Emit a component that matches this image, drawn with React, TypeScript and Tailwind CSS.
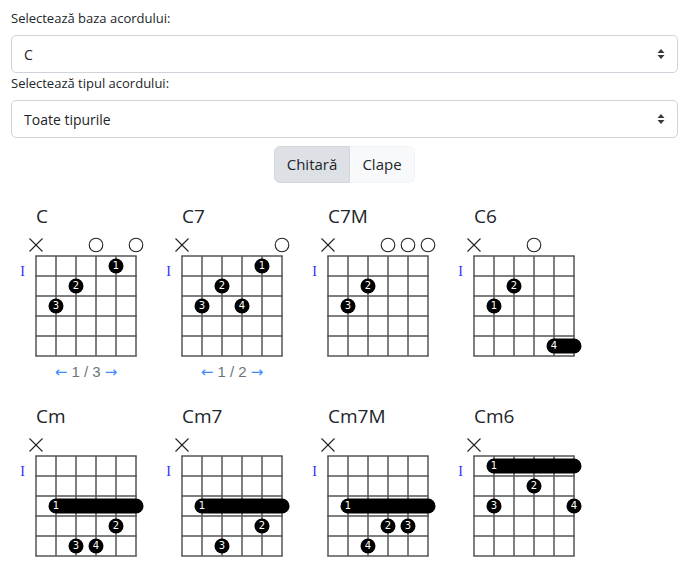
import React from "react";

type Dot = { s: number; f: number; n: number; to?: number };
type Chord = { name: string; marks: (string | null)[]; dots: Dot[]; nav?: string };

const chords: Chord[] = [
  { name: "C", marks: ["x", null, null, "o", null, "o"], dots: [{ s: 5, f: 1, n: 1 }, { s: 3, f: 2, n: 2 }, { s: 2, f: 3, n: 3 }], nav: "3" },
  { name: "C7", marks: ["x", null, null, null, null, "o"], dots: [{ s: 5, f: 1, n: 1 }, { s: 3, f: 2, n: 2 }, { s: 2, f: 3, n: 3 }, { s: 4, f: 3, n: 4 }], nav: "2" },
  { name: "C7M", marks: ["x", null, null, "o", "o", "o"], dots: [{ s: 3, f: 2, n: 2 }, { s: 2, f: 3, n: 3 }] },
  { name: "C6", marks: ["x", null, null, "o", null, null], dots: [{ s: 3, f: 2, n: 2 }, { s: 2, f: 3, n: 1 }, { s: 5, f: 5, n: 4, to: 6 }] },
  { name: "Cm", marks: ["x", null, null, null, null, null], dots: [{ s: 2, f: 3, n: 1, to: 6 }, { s: 5, f: 4, n: 2 }, { s: 3, f: 5, n: 3 }, { s: 4, f: 5, n: 4 }] },
  { name: "Cm7", marks: ["x", null, null, null, null, null], dots: [{ s: 2, f: 3, n: 1, to: 6 }, { s: 5, f: 4, n: 2 }, { s: 3, f: 5, n: 3 }] },
  { name: "Cm7M", marks: ["x", null, null, null, null, null], dots: [{ s: 2, f: 3, n: 1, to: 6 }, { s: 4, f: 4, n: 2 }, { s: 5, f: 4, n: 3 }, { s: 3, f: 5, n: 4 }] },
  { name: "Cm6", marks: ["x", null, null, null, null, null], dots: [{ s: 2, f: 1, n: 1, to: 6 }, { s: 4, f: 2, n: 2 }, { s: 2, f: 3, n: 3 }, { s: 6, f: 3, n: 4 }] },
];

const GX = 18;
const GY = 28;
const sx = (s: number) => GX + (s - 1) * 20;
const fy = (f: number) => GY + (f - 1) * 20 + 10;

function Diagram({ chord }: { chord: Chord }) {
  return (
    <svg width={146} height={167} className="block">
      {chord.marks.map((m, i) => {
        const x = sx(i + 1);
        if (m === "x")
          return (
            <g key={i} stroke="#222" strokeWidth={1.1}>
              <line x1={x - 6.5} y1={10.5} x2={x + 6.5} y2={23.5} />
              <line x1={x - 6.5} y1={23.5} x2={x + 6.5} y2={10.5} />
            </g>
          );
        if (m === "o") return <circle key={i} cx={x} cy={17} r={6.8} fill="none" stroke="#222" strokeWidth={1.1} />;
        return null;
      })}
      <text x={4.5} y={48} fontSize={14} fill="#3030ff" fontFamily="'Liberation Serif', serif" textAnchor="middle">
        I
      </text>
      {[0, 1, 2, 3, 4, 5].map((i) => (
        <line key={"v" + i} x1={GX + i * 20} y1={GY} x2={GX + i * 20} y2={GY + 100} stroke="#555" strokeWidth={1.5} />
      ))}
      {[0, 1, 2, 3, 4, 5].map((i) => (
        <line key={"h" + i} x1={GX - 0.75} y1={GY + i * 20} x2={GX + 100.75} y2={GY + i * 20} stroke="#555" strokeWidth={1.5} />
      ))}
      {chord.dots.map((d, i) => {
        const x = sx(d.s);
        const y = fy(d.f);
        return (
          <g key={i}>
            {d.to ? (
              <rect x={x - 7.5} y={y - 7.5} width={sx(d.to) - x + 15} height={15} rx={7.5} fill="#000" />
            ) : (
              <circle cx={x} cy={y} r={7.5} fill="#000" />
            )}
            <text x={x} y={y + 3.4} fontSize={10} fill="#fff" textAnchor="middle" fontFamily="'DejaVu Sans', sans-serif">
              {d.n}
            </text>
          </g>
        );
      })}
      {chord.nav && (
        <text x={GX + 50} y={149} fontSize={15} textAnchor="middle" fontFamily="'DejaVu Sans', sans-serif">
          <tspan fill="#3d8bfd">←</tspan>
          <tspan fill="#6c757d" fontFamily="'Liberation Sans', Arial, sans-serif"> 1 / {chord.nav} </tspan>
          <tspan fill="#3d8bfd">→</tspan>
        </text>
      )}
    </svg>
  );
}

function FakeSelect({ value }: { value: string }) {
  return (
    <div className="flex h-[38px] items-center justify-between rounded-[5px] border border-[#ced4da] bg-white pl-[12px] pr-[12px] text-[14px] text-[#212529]">
      <span>{value}</span>
      <svg width="8" height="12" viewBox="0 0 8 12">
        <path d="M4 1 L7.5 5 L0.5 5 Z" fill="#343a40" />
        <path d="M4 11 L7.5 7 L0.5 7 Z" fill="#343a40" />
      </svg>
    </div>
  );
}

export default function App() {
  return (
    <div className="min-h-[575px] bg-white px-[11px] pt-[8px] text-[#212529]" style={{ fontFamily: "'Open Sans', 'Noto Sans', sans-serif" }}>
      <div className="mb-[6px] text-[13px] leading-[21px]">Selectează baza acordului:</div>
      <FakeSelect value="C" />
      <div className="mb-[6px] text-[13px] leading-[21px]">Selectează tipul acordului:</div>
      <FakeSelect value="Toate tipurile" />
      <div className="mt-[8px] flex justify-center">
        <div className="flex h-[37px] text-[15px]">
          <div className="flex w-[76px] items-center justify-center rounded-l-[6px] border border-[#d3d7dc] bg-[#dde1e6]">Chitară</div>
          <div className="flex w-[65px] items-center justify-center rounded-r-[6px] border border-l-0 border-[#f1f3f5] bg-[#f8f9fa]">Clape</div>
        </div>
      </div>
      <div className="mt-[12px] flex flex-wrap pl-[7px]">
        {chords.map((c) => (
          <div key={c.name} className="h-[200px] w-[146px] pt-[9px]">
            <div className="ml-[18px] h-[24px] text-[19px] leading-[24px] text-[#212529]">{c.name}</div>
            <Diagram chord={c} />
          </div>
        ))}
      </div>
    </div>
  );
}
